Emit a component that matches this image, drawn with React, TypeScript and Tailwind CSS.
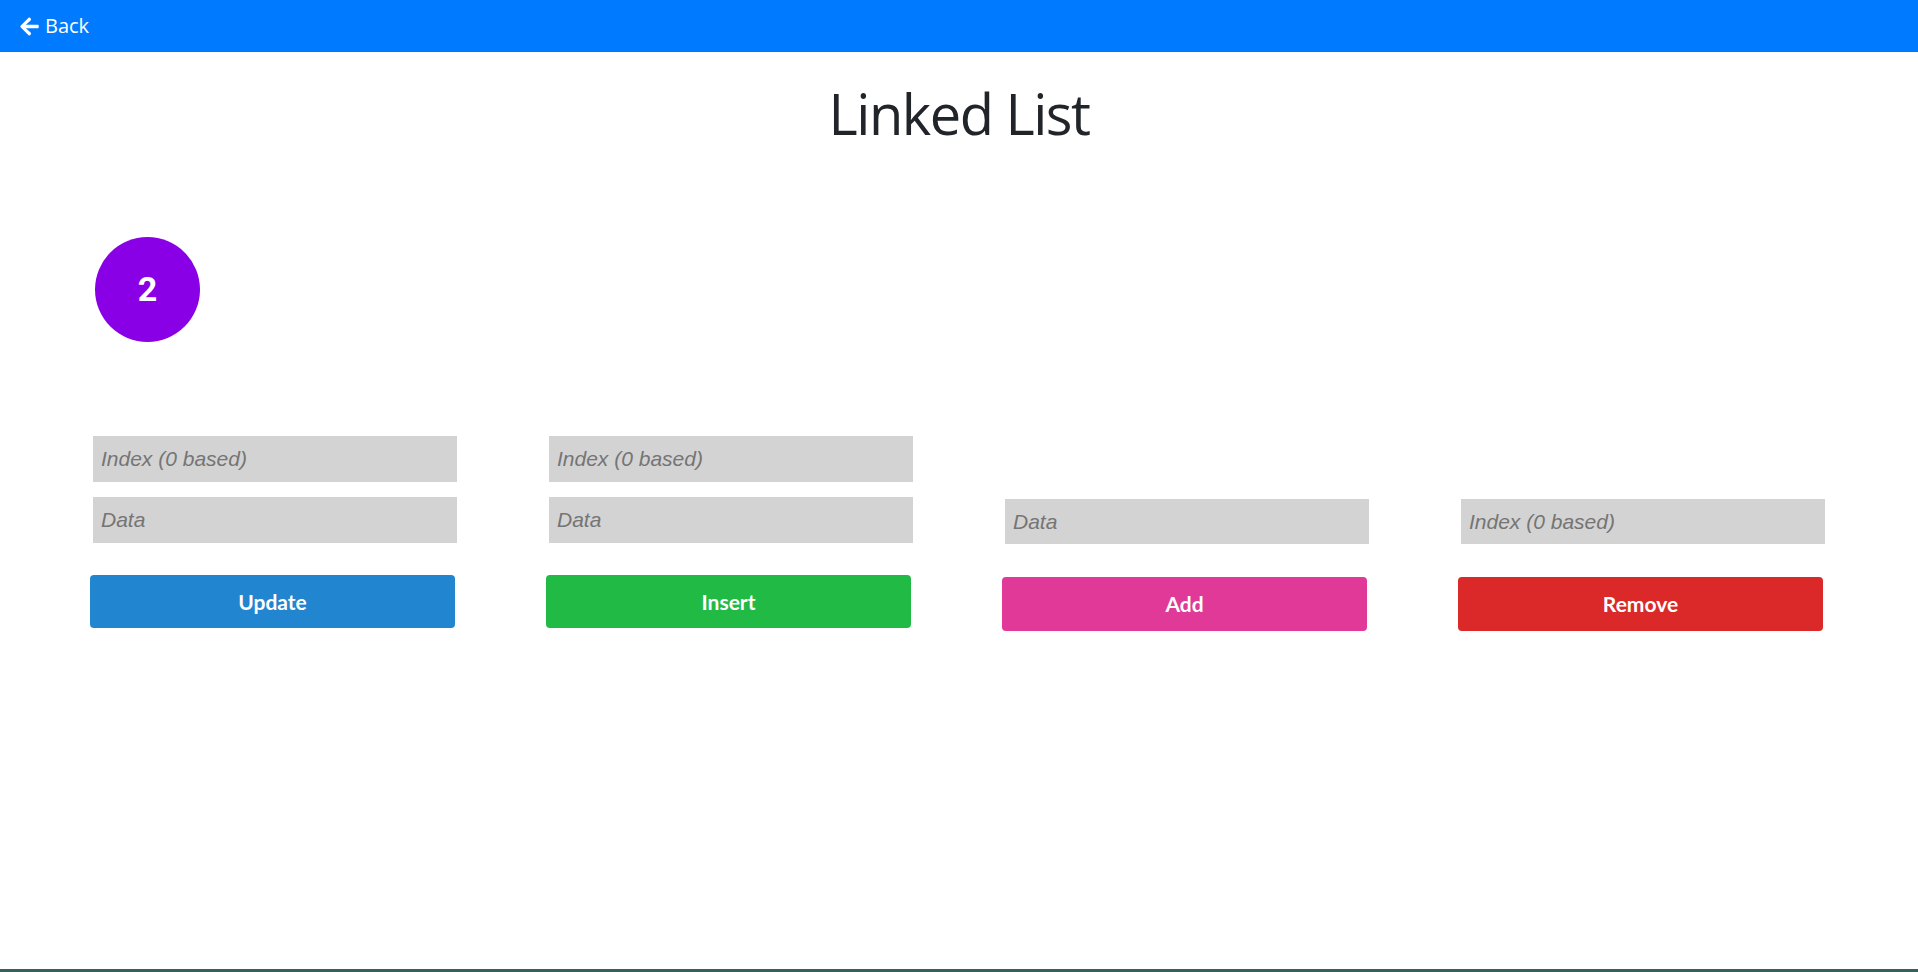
import React from 'react';

const ArrowLeft = () => (
  <svg viewBox="0 0 448 512" className="h-[21px] w-[19px] fill-white">
    <path d="M257.5 445.1l-22.2 22.2c-9.4 9.4-24.6 9.4-33.9 0L7 273c-9.4-9.4-9.4-24.6 0-33.9L201.4 44.7c9.4-9.4 24.6-9.4 33.9 0l22.2 22.2c9.5 9.5 9.3 25-.4 34.3L136.6 216H424c13.3 0 24 10.7 24 24v32c0 13.3-10.7 24-24 24H136.6l120.5 114.8c9.8 9.3 10 24.8.4 34.3z" />
  </svg>
);

const inputClass =
  'block w-[364px] bg-[#d3d3d3] px-2 text-[21px] text-[#333] outline-none placeholder:italic placeholder:text-[#757575] [font-family:"Liberation_Sans",Arial,sans-serif]';

const buttonClass =
  'block -ml-[3px] w-[365px] rounded-[4px] text-[21px] font-bold text-white [font-family:Lato,"Open_Sans",sans-serif]';

const App = () => {
  return (
    <div className="flex h-[972px] flex-col bg-white">
      <nav className="flex h-[52px] items-center bg-[#007bff] pl-[20px] text-white">
        <a href="#" className="flex items-center gap-[6px] text-[20px] [font-family:'Open_Sans',sans-serif]">
          <ArrowLeft />
          Back
        </a>
      </nav>

      <main className="flex-1">
        <h1 className="mt-[28px] text-center text-[56px] font-normal leading-[1.2] tracking-[-1.5px] text-[#212529] [font-family:'Open_Sans',sans-serif]">
          Linked List
        </h1>

        <div className="ml-[95px] mt-[90px] flex h-[105px] w-[105px] items-center justify-center rounded-full bg-[#8a00e6]">
          <span className="text-[34px] font-bold text-white [font-family:Roboto,'Liberation_Sans',sans-serif]">2</span>
        </div>

        <div className="mt-[94px] flex items-start justify-center gap-[92px]">
          <div className="w-[364px]">
            <input className={`${inputClass} h-[46px]`} placeholder="Index (0 based)" />
            <input className={`${inputClass} mt-[15px] h-[46px]`} placeholder="Data" />
            <button className={`${buttonClass} mt-[32px] h-[53px] bg-[#2185d0]`}>Update</button>
          </div>

          <div className="w-[364px]">
            <input className={`${inputClass} h-[46px]`} placeholder="Index (0 based)" />
            <input className={`${inputClass} mt-[15px] h-[46px]`} placeholder="Data" />
            <button className={`${buttonClass} mt-[32px] h-[53px] bg-[#21ba45]`}>Insert</button>
          </div>

          <div className="mt-[63px] w-[364px]">
            <input className={`${inputClass} h-[45px]`} placeholder="Data" />
            <button className={`${buttonClass} mt-[33px] h-[54px] bg-[#e03997]`}>Add</button>
          </div>

          <div className="mt-[63px] w-[364px]">
            <input className={`${inputClass} h-[45px]`} placeholder="Index (0 based)" />
            <button className={`${buttonClass} mt-[33px] h-[54px] bg-[#db2828]`}>Remove</button>
          </div>
        </div>
      </main>

      <footer className="h-[3px] bg-[#36605c]" />
    </div>
  );
};

export default App;
